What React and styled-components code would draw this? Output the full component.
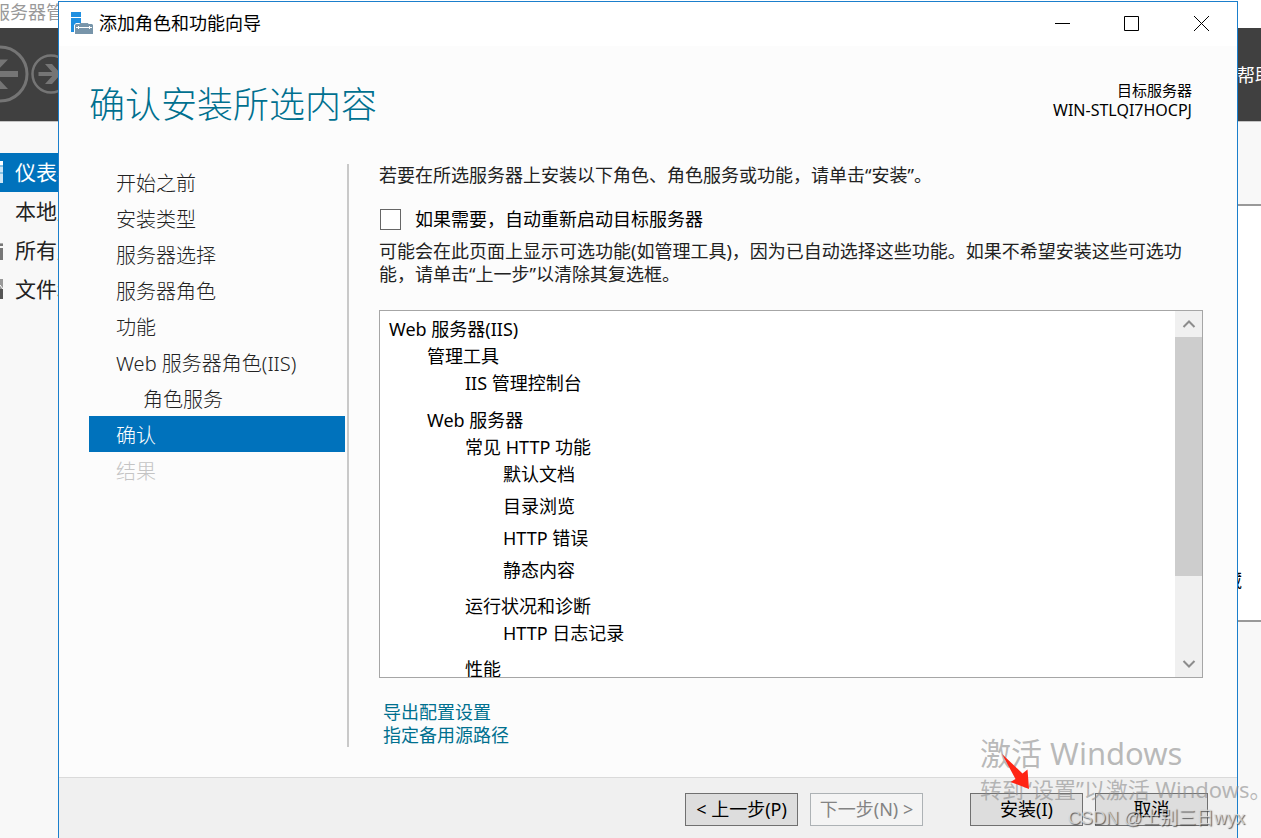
import React from "react";
import styled, { createGlobalStyle, css } from "styled-components";

const GlobalStyle = createGlobalStyle`
  * { box-sizing: border-box; }
  html, body, #root { height: 100%; margin: 0; }
  body {
    overflow: hidden;
    background: #f8f8f8;
    color: #000;
    font-family: "Noto Sans", "Noto Sans CJK SC", sans-serif;
    font-size: 18px;
    line-height: 24px;
  }
  button, input { font: inherit; color: inherit; }
`;

const Desktop = styled.div`
  position: relative;
  height: 100%;
  overflow: hidden;
`;

/* Server Manager, behind the wizard */
const Backdrop = styled.div`
  display: flex;
  flex-direction: column;
  height: 100%;
`;
const BackTitle = styled.div`
  flex: none;
  height: 28px;
  padding-right: 4px;
  background: #fff;
  color: #999;
  white-space: nowrap;
  & > span { margin-left: -8px; }
`;
const BackToolbar = styled.div`
  flex: none;
  display: flex;
  align-items: center;
  justify-content: space-between;
  height: 94px;
  background: #404040;
  border-bottom: 1px solid #c4c4c4;
  color: #fff;
`;
const HelpMenu = styled.div`
  width: 24px;
  overflow: hidden;
  white-space: nowrap;
`;
const BackMain = styled.div`
  flex: 1;
  display: flex;
  justify-content: space-between;
`;
const BackNav = styled.nav`
  width: 220px;
  padding-top: 31px;
`;
const BackLink = styled.a`
  display: flex;
  align-items: center;
  gap: 12px;
  height: 39px;
  padding-bottom: 2px;
  font-size: 21px;
  text-decoration: none;
  color: ${(p) => (p.$active ? "#fff" : "#222")};
  background: ${(p) => (p.$active ? "#0072bc" : "transparent")};
`;
const BackPanel = styled.div`
  display: flex;
  align-items: flex-end;
  justify-content: flex-end;
  align-self: flex-start;
  width: 400px;
  height: 418px;
  margin-top: 82px;
  padding: 0 19px 28px 0;
  background: #fff;
  border: solid #999;
  border-width: 2px 0;
`;

/* Wizard window */
const Wizard = styled.section`
  position: absolute;
  inset: 1px 23px 0 58px;
  display: flex;
  flex-direction: column;
  border: solid #1b7fcc;
  border-width: 1px 1px 0;
  background: #fcfcfc;
`;
const TitleBar = styled.header`
  flex: none;
  display: flex;
  align-items: center;
  height: 44px;
  padding: 0 0 2px 12px;
  background: #fff;
  & > svg { flex: none; margin-right: 5px; }
`;
const WindowName = styled.div`
  flex: 1;
`;
const CaptionButton = styled.button`
  display: grid;
  place-items: center;
  width: ${(p) => p.$width || 69}px;
  height: 42px;
  padding: 0;
  border: 0;
  background: none;
`;
const Heading = styled.div`
  flex: none;
  display: flex;
  justify-content: space-between;
  align-items: flex-start;
  height: 118px;
  padding: 34px 45px 0 30px;
`;
const PageTitle = styled.h1`
  margin: 1px 0 0;
  font-size: 36px;
  line-height: 48px;
  font-weight: 300;
  color: #00708f;
`;
const Target = styled.div`
  font-size: 15px;
  line-height: 20px;
  text-align: right;
`;
const ServerName = styled.div`
  font-size: 16px;
`;
const Body = styled.div`
  flex: 1;
  min-height: 0;
  display: flex;
  padding: 0 34px 30px 30px;
`;
const Steps = styled.nav`
  flex: none;
  width: 260px;
  padding-right: 2px;
  border-right: 2px solid #c9c9c9;
`;
const Step = styled.a`
  display: block;
  padding-top: 4px;
  padding-left: ${(p) => (p.$nested ? 54 : 27)}px;
  font-size: 20px;
  line-height: 32px;
  font-weight: 300;
  text-decoration: none;
  color: #222;
  ${(p) => p.$state === "current" && css`color: #fff; background: #0072bc;`}
  ${(p) => p.$state === "disabled" && css`color: #c4c4c4;`}
`;
const Content = styled.main`
  flex: 1;
  min-width: 0;
  display: flex;
  flex-direction: column;
  padding-left: 30px;
`;
const Text = styled.p`
  margin: 0;
  line-height: 23px;
  color: #222;
`;
const Restart = styled.label`
  display: flex;
  align-items: center;
  gap: 14px;
  margin: 20px 0 9px;
  padding-left: 1px;
`;
const Tick = styled.input`
  appearance: none;
  width: 21px;
  height: 21px;
  margin: 0;
  border: 1px solid #666;
  background: #fff;
`;
const ListBox = styled.div`
  flex: 1;
  min-height: 0;
  display: flex;
  margin: 24px 0 23px;
  border: 1px solid #a6a6a6;
  background: #fff;
`;
const Tree = styled.ul`
  flex: 1;
  margin: 0;
  padding: 5px 9px 0;
  overflow: hidden;
  list-style: none;
`;
const TreeItem = styled.li`
  padding-left: ${(p) => p.$level * 38}px;
  margin-top: ${(p) => p.$gap || 0}px;
  line-height: 27px;
`;
const ScrollBar = styled.div`
  flex: none;
  display: flex;
  flex-direction: column;
  width: 27px;
  background: #f0f0f0;
`;
const ScrollButton = styled.button`
  display: grid;
  place-items: center;
  height: 26px;
  padding: 0;
  border: 0;
  background: #f0f0f0;
`;
const Track = styled.div`
  flex: 1;
`;
const Thumb = styled.div`
  height: 76%;
  background: #cdcdcd;
`;
const Links = styled.div`
  display: flex;
  flex-direction: column;
  align-items: flex-start;
  padding-left: 4px;
`;
const TextLink = styled.a`
  line-height: 23px;
  color: #00708f;
  text-decoration: none;
`;
const Footer = styled.footer`
  flex: none;
  display: flex;
  justify-content: flex-end;
  gap: 12px;
  height: 61px;
  padding: 15px 29px 0 0;
  border-top: 1px solid #dadada;
  background: #f0f0f0;
`;
const PushButton = styled.button`
  width: 113px;
  height: 33px;
  padding: 0 0 1px;
  border: 1px solid #707070;
  background: #ddd;
  white-space: nowrap;
  margin-right: ${(p) => (p.$last ? 35 : 0)}px;
  &:disabled {
    border-color: #adb2b5;
    background: #f4f4f4;
    color: #838383;
  }
`;

/* Overlays */
const Activation = styled.div`
  position: absolute;
  left: calc(100% - 281px);
  bottom: 33px;
  font-size: 22px;
  line-height: 32px;
  white-space: nowrap;
  color: rgba(140, 140, 140, 0.6);
  pointer-events: none;
`;
const ActivationTitle = styled.div`
  font-size: 31px;
  line-height: 40px;
`;
const Credit = styled.div`
  position: absolute;
  right: 16px;
  bottom: 8px;
  color: rgba(225, 225, 225, 0.75);
  font-family: "Liberation Sans", "Noto Sans CJK SC", sans-serif;
  text-shadow: 1px 1px 1px rgba(60, 60, 60, 0.8);
  pointer-events: none;
`;
const Pointer = styled.svg`
  position: absolute;
  right: 229px;
  bottom: 46px;
  pointer-events: none;
`;

const steps = [
  { name: "开始之前" },
  { name: "安装类型" },
  { name: "服务器选择" },
  { name: "服务器角色" },
  { name: "功能" },
  { name: "Web 服务器角色(IIS)" },
  { name: "角色服务", nested: true },
  { name: "确认", state: "current" },
  { name: "结果", state: "disabled" },
];

const features = [
  { name: "Web 服务器(IIS)", level: 0 },
  { name: "管理工具", level: 1 },
  { name: "IIS 管理控制台", level: 2 },
  { name: "Web 服务器", level: 1, gap: 10 },
  { name: "常见 HTTP 功能", level: 2 },
  { name: "默认文档", level: 3 },
  { name: "目录浏览", level: 3, gap: 5 },
  { name: "HTTP 错误", level: 3, gap: 5 },
  { name: "静态内容", level: 3, gap: 5 },
  { name: "运行状况和诊断", level: 2, gap: 9 },
  { name: "HTTP 日志记录", level: 3 },
  { name: "性能", level: 2, gap: 9 },
];

const WizardIcon = () => (
  <svg width="23" height="23" viewBox="0 0 23 23" aria-hidden="true">
    <path d="M0 0h10v5H0zM0 6h10v5H5l-2 2v7H0z" fill="#1f8fe0" />
    <path d="M9 12.500v-1h8v1" fill="none" stroke="#7f9aae" />
    <path d="M5 12h16l1 1v9H4v-9z" fill="#7895aa" />
    <path d="M5 15.500h16M7.500 14v3M18.500 14v3" fill="none" stroke="#fff" />
  </svg>
);

const Chevron = ({ up }) => (
  <svg width="14" height="10" viewBox="0 0 14 10" fill="none" stroke="#8c8c8c" strokeWidth="2" aria-hidden="true">
    <path d={up ? "M1.500 8 7 2.500 12.500 8" : "M1.500 2 7 7.500 12.500 2"} />
  </svg>
);

const HistoryArrows = () => (
  <svg width="90" height="60" viewBox="0 0 90 60" fill="none" stroke="#757575" aria-hidden="true">
    <circle cx="0" cy="29" r="27" strokeWidth="3" />
    <path d="M-12 29h30" strokeWidth="6" />
    <path d="M-6 29 8 14.500H-1L-14 29l13 15h9z" fill="#757575" stroke="none" />
    <circle cx="51" cy="29" r="18.500" strokeWidth="2.500" />
    <path d="M38.500 29h20" strokeWidth="4" />
    <path d="M45 19h7l9 10-9 10h-7l9-10z" fill="#757575" stroke="none" />
  </svg>
);

const NavGlyph = ({ kind }) => (
  <svg width="3" height="24" viewBox="0 0 3 24" aria-hidden="true">
    {kind === "dashboard" && (
      <>
        <path d="M0 1h3v22H0z" fill="#cfe6f5" />
        <path d="M0 1h3v4H0z" fill="#fff" />
        <path d="M0 6h3M0 13h3" stroke="#3c9bd0" />
      </>
    )}
    {kind === "servers" && (
      <>
        <path d="M0 5h3v3H0zM0 10h3v12H0z" fill="#777" />
        <path d="M0 5h3v1H0z" fill="#aaa" />
      </>
    )}
    {kind === "files" && (
      <>
        <path d="M0 2h3v10H0z" fill="#999" />
        <path d="M0 12h3v10H0z" fill="#555" />
        <path d="m0 8 3 4" stroke="#fff" />
      </>
    )}
  </svg>
);

export default function App() {
  return (
    <Desktop>
      <GlobalStyle />
      <Backdrop>
        <BackTitle><span>服务器管理器</span></BackTitle>
        <BackToolbar>
          <HistoryArrows />
          <HelpMenu>帮助</HelpMenu>
        </BackToolbar>
        <BackMain>
          <BackNav>
            <BackLink href="#dashboard" $active><NavGlyph kind="dashboard" />仪表板</BackLink>
            <BackLink href="#local"><NavGlyph />本地服务器</BackLink>
            <BackLink href="#all"><NavGlyph kind="servers" />所有服务器</BackLink>
            <BackLink href="#files"><NavGlyph kind="files" />文件和存储服务</BackLink>
          </BackNav>
          <BackPanel>隐藏</BackPanel>
        </BackMain>
      </Backdrop>

      <Wizard>
        <TitleBar>
          <WizardIcon />
          <WindowName>添加角色和功能向导</WindowName>
          <CaptionButton aria-label="最小化">
            <svg width="15" height="15" stroke="#000" fill="none"><path d="M0 7.500h15" /></svg>
          </CaptionButton>
          <CaptionButton aria-label="最大化">
            <svg width="15" height="15" stroke="#000" fill="none"><path d="M.5.5h14v14H.5z" /></svg>
          </CaptionButton>
          <CaptionButton aria-label="关闭" $width={71}>
            <svg width="15" height="15" stroke="#000" fill="none"><path d="m0 0 15 15M15 0 0 15" /></svg>
          </CaptionButton>
        </TitleBar>

        <Heading>
          <PageTitle>确认安装所选内容</PageTitle>
          <Target>
            <div>目标服务器</div>
            <ServerName>WIN-STLQI7HOCPJ</ServerName>
          </Target>
        </Heading>

        <Body>
          <Steps>
            {steps.map((s) => (
              <Step key={s.name} href="#step" $state={s.state} $nested={s.nested}>{s.name}</Step>
            ))}
          </Steps>
          <Content>
            <Text>若要在所选服务器上安装以下角色、角色服务或功能，请单击“安装”。</Text>
            <Restart>
              <Tick type="checkbox" />
              如果需要，自动重新启动目标服务器
            </Restart>
            <Text>
              可能会在此页面上显示可选功能(如管理工具)，因为已自动选择这些功能。如果不希望安装这些可选功能，请单击“上一步”以清除其复选框。
            </Text>
            <ListBox>
              <Tree>
                {features.map((f) => (
                  <TreeItem key={f.name} $level={f.level} $gap={f.gap}>{f.name}</TreeItem>
                ))}
              </Tree>
              <ScrollBar>
                <ScrollButton aria-label="向上滚动"><Chevron up /></ScrollButton>
                <Track><Thumb /></Track>
                <ScrollButton aria-label="向下滚动"><Chevron /></ScrollButton>
              </ScrollBar>
            </ListBox>
            <Links>
              <TextLink href="#export">导出配置设置</TextLink>
              <TextLink href="#source">指定备用源路径</TextLink>
            </Links>
          </Content>
        </Body>

        <Footer>
          <PushButton>&lt; 上一步(P)</PushButton>
          <PushButton disabled $last>下一步(N) &gt;</PushButton>
          <PushButton>安装(I)</PushButton>
          <PushButton>取消</PushButton>
        </Footer>
      </Wizard>

      <Activation>
        <ActivationTitle>激活 Windows</ActivationTitle>
        <div>转到“设置”以激活 Windows。</div>
      </Activation>
      <Credit>CSDN @士别三日wyx</Credit>
      <Pointer width="32" height="40" viewBox="0 0 32 40" aria-hidden="true">
        <path d="M2 2 22.500 21.500 27.500 17.500 29 37 10.500 30 15.500 27Z" fill="#ff2414" />
      </Pointer>
    </Desktop>
  );
}
